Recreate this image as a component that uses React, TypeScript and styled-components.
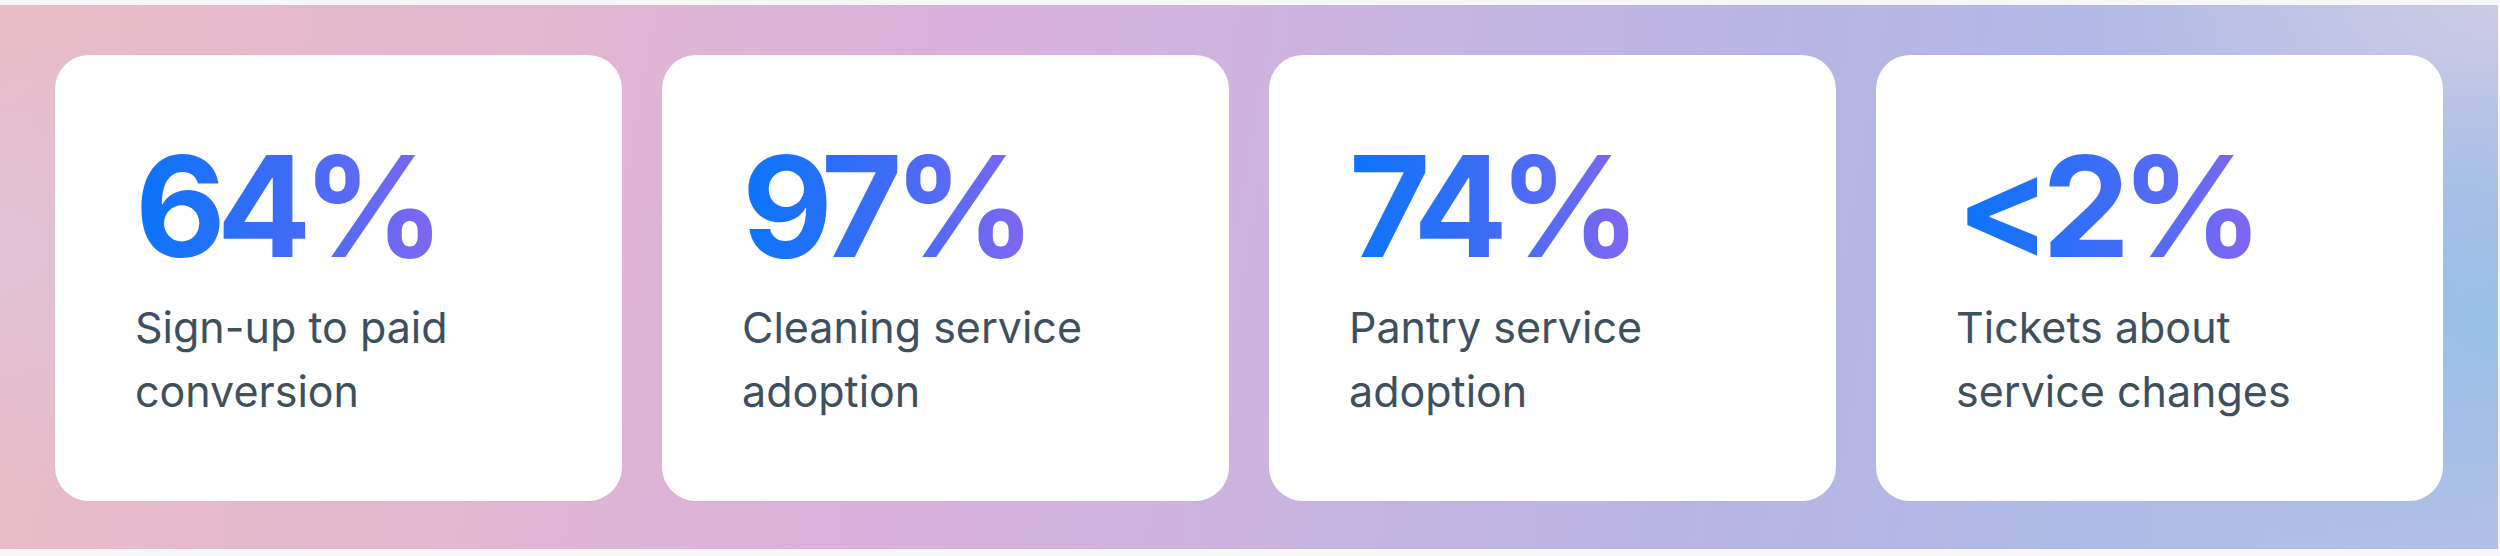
import { createGlobalStyle, styled } from 'styled-components';

type Stat = {
  value: string;
  label: [string, string];
};

const STATS: Stat[] = [
  { value: '64%', label: ['Sign-up to paid', 'conversion'] },
  { value: '97%', label: ['Cleaning service', 'adoption'] },
  { value: '74%', label: ['Pantry service', 'adoption'] },
  { value: '<2%', label: ['Tickets about', 'service changes'] },
];

const App = () => {
  return (
    <Page>
      <GlobalStyle />
      <Panel>
        {STATS.map((stat) => (
          <Card key={stat.value}>
            <Value>{stat.value}</Value>
            <Label>
              {stat.label[0]}
              <br />
              {stat.label[1]}
            </Label>
          </Card>
        ))}
      </Panel>
    </Page>
  );
};

export default App;

const GlobalStyle = createGlobalStyle`
  html, body {
    margin: 0;
    padding: 0;
    background: #f7f6f8;
  }
  body {
    font-family: Inter, 'Noto Sans', sans-serif;
  }
`;

const Page = styled.div`
  width: 2500px;
  height: 556px;
  padding: 5px 2px 7px 0;
  box-sizing: border-box;
`;

const Panel = styled.div`
  height: 100%;
  box-sizing: border-box;
  padding: 50px 55px 48px;
  display: grid;
  grid-template-columns: repeat(4, 1fr);
  gap: 40px;
  background:
    radial-gradient(ellipse 380px 260px at 100% 58%, rgba(150, 192, 232, 0.95), rgba(150, 192, 232, 0) 100%),
    radial-gradient(ellipse 420px 200px at 100% 0%, rgba(206, 204, 228, 0.9), rgba(206, 204, 228, 0) 100%),
    radial-gradient(ellipse 260px 240px at 0% 45%, rgba(222, 196, 220, 0.8), rgba(222, 196, 220, 0) 100%),
    linear-gradient(
      100deg,
      #e9bcc6 0%,
      #e3b8cf 18%,
      #d9b0dc 38%,
      #cbb4e0 52%,
      #b9b4e4 68%,
      #b0bae6 84%,
      #b6c0e6 100%
    );
`;

const Card = styled.div`
  background: #ffffff;
  border-radius: 34px;
  padding: 81px 60px 0 80px;
  display: flex;
  flex-direction: column;
  gap: 19px;
`;

const Value = styled.div`
  font-family: Inter, 'Noto Sans', sans-serif;
  font-size: 140px;
  font-weight: 700;
  line-height: 1;
  letter-spacing: -0.065em;
  width: fit-content;
  padding-right: 10px;
  background: linear-gradient(90deg, #0a74fb 0%, #3f6cf6 50%, #8566f1 100%);
  -webkit-background-clip: text;
  background-clip: text;
  color: transparent;
`;

const Label = styled.div`
  font-family: Inter, 'Noto Sans', sans-serif;
  font-size: 43px;
  font-weight: 400;
  line-height: 64px;
  color: #3e505d;
`;
